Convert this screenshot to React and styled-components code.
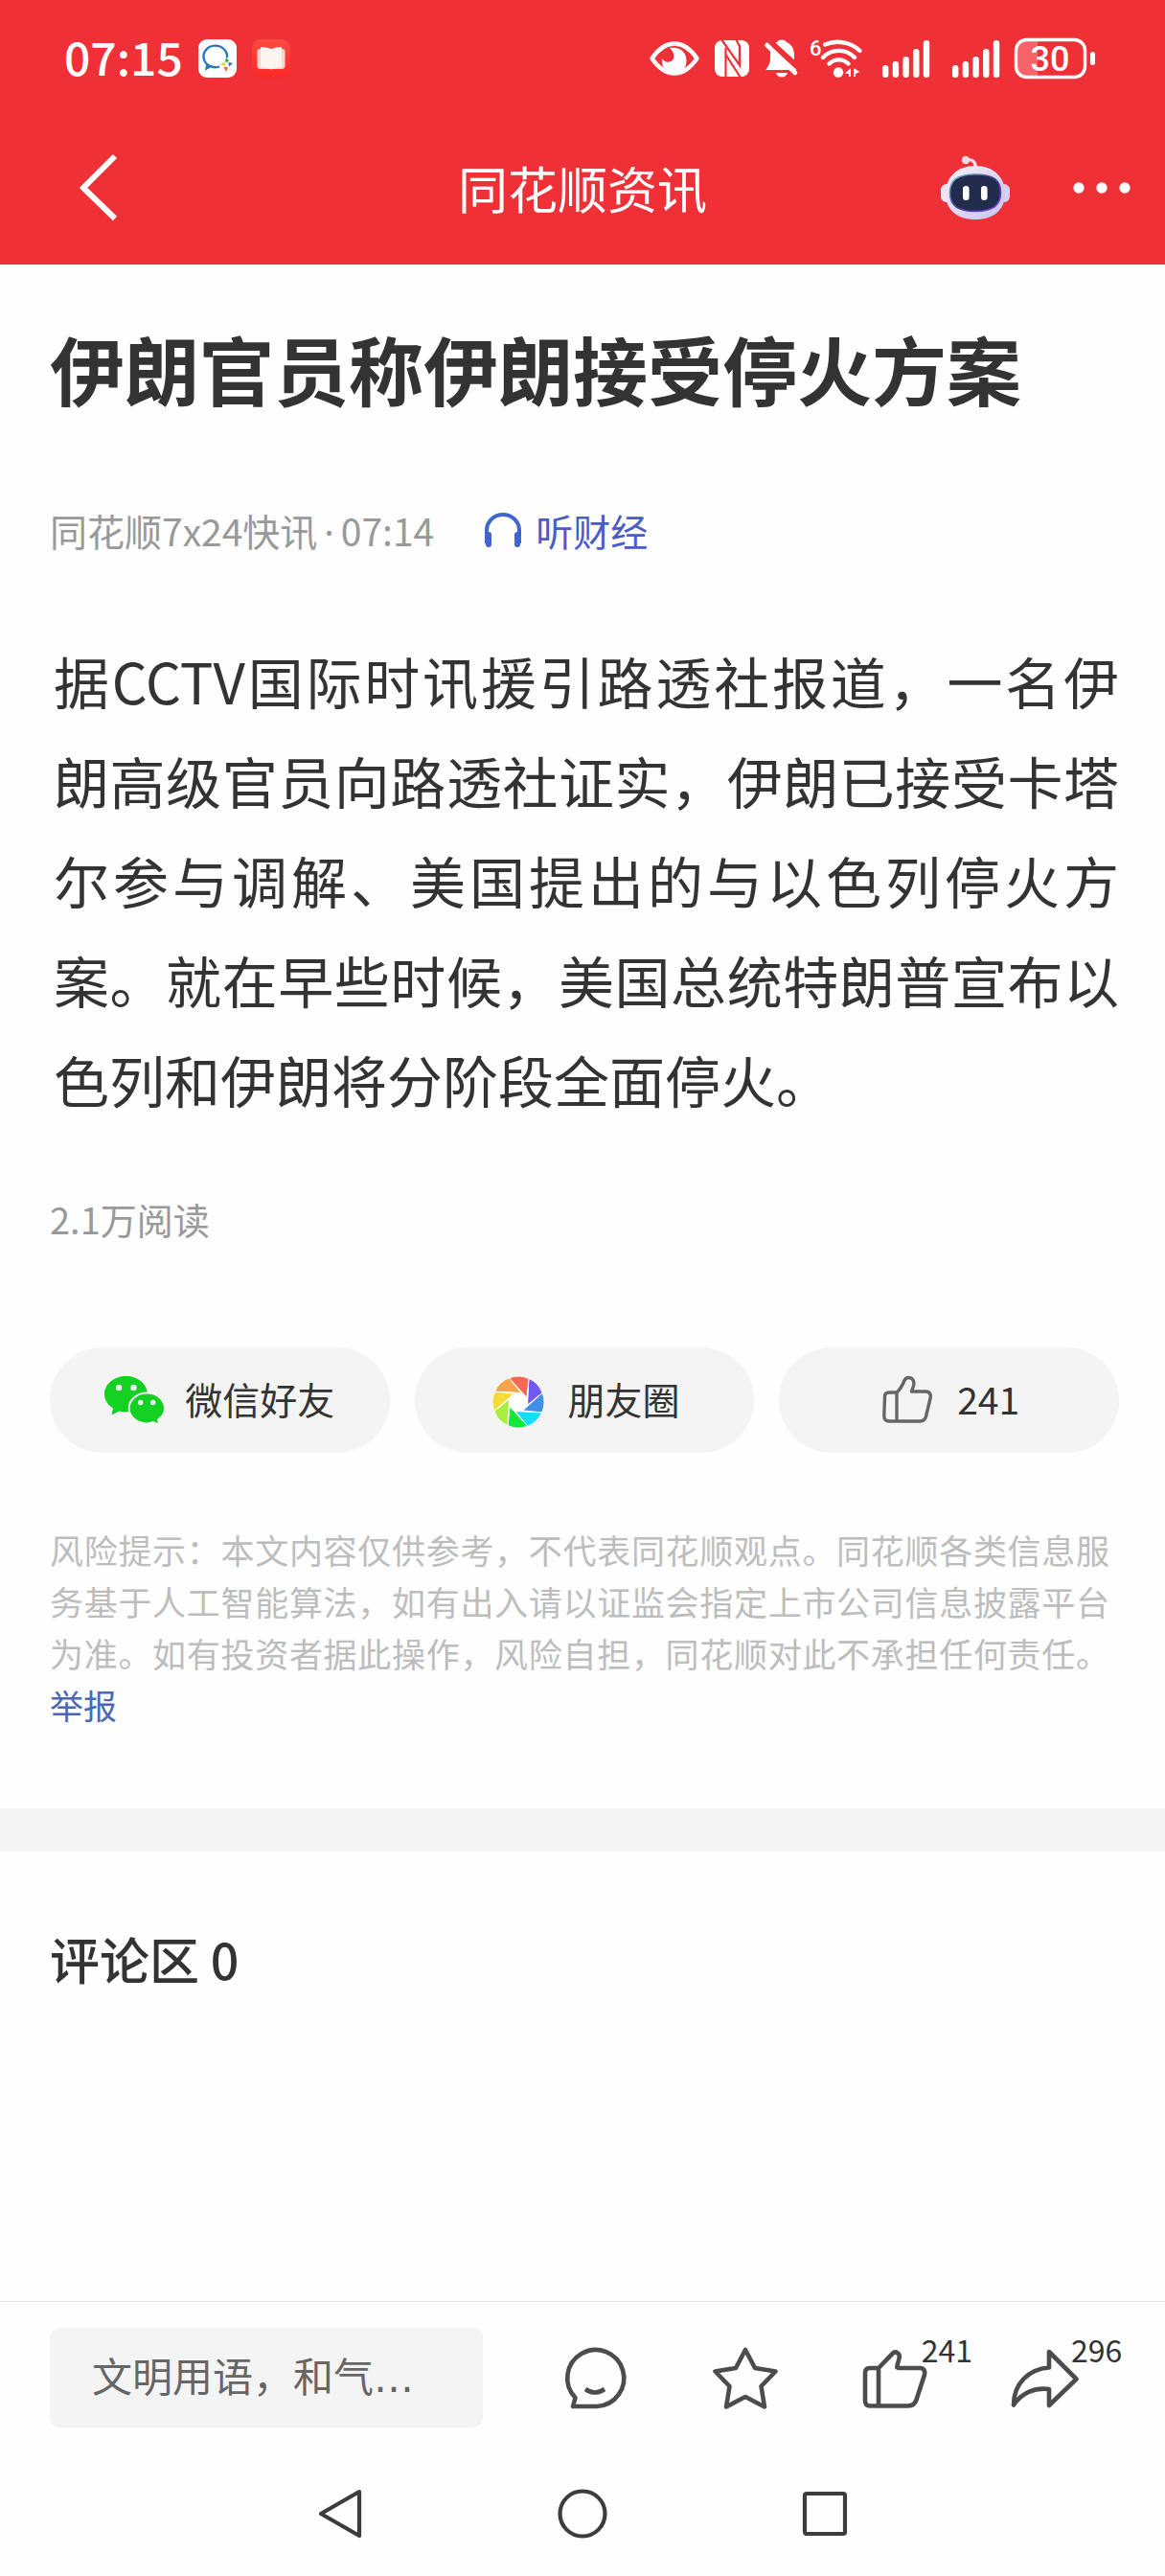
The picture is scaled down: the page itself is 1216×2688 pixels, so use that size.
import React from "react";
import styled, { createGlobalStyle } from "styled-components";

const color = {
  brand: "#f03037",
  ink: "#333333",
  soft: "#666666",
  muted: "#999999",
  faint: "#bdbdbd",
  link: "#4a67b4",
  listen: "#4a5cc6",
  fill: "#f4f4f4",
  page: "#fefefe",
};

const GlobalStyle = createGlobalStyle`
  *, *::before, *::after { box-sizing: border-box; }
  body {
    margin: 0;
    background: ${color.page};
    color: ${color.ink};
    font-family: "Noto Sans CJK SC", "Noto Sans", sans-serif;
  }
  h1, h2, p { margin: 0; }
  button {
    display: inline-flex;
    align-items: center;
    justify-content: center;
    border: 0;
    padding: 0;
    background: none;
    color: inherit;
    font: inherit;
    cursor: pointer;
  }
  svg { display: block; flex: none; overflow: visible; }
`;

const Screen = styled.div`
  display: flex;
  flex-direction: column;
  min-height: 100vh;
`;

const Top = styled.header`
  background: ${color.brand};
  color: #fff;
`;

const StatusBar = styled.div`
  display: flex;
  align-items: center;
  justify-content: space-between;
  height: 122px;
  padding: 0 73px 0 67px;
`;

const StatusGroup = styled.div`
  display: flex;
  align-items: center;
  gap: ${(p) => p.$gap}px;
`;

const Clock = styled.time`
  padding-bottom: 6px;
  font-size: 48px;
  font-weight: 500;
  line-height: 56px;
`;

const TitleBar = styled.div`
  display: grid;
  grid-template-columns: 1fr auto 1fr;
  align-items: center;
  height: 154px;
  padding: 0 36px 6px 82px;
`;

const BarTitle = styled.div`
  margin-right: 46px;
  font-size: 52px;
  line-height: 72px;
`;

const BarActions = styled.div`
  display: flex;
  align-items: center;
  justify-content: flex-end;
  gap: 66px;
`;

const BackButton = styled.button`
  justify-self: start;
`;

const Article = styled.article`
  padding: 58px 48px 81px 52px;
`;

const Headline = styled.h1`
  font-size: 78px;
  font-weight: 700;
  line-height: 100px;
`;

const Meta = styled.div`
  display: flex;
  align-items: center;
  gap: 52px;
  height: 56px;
  margin-top: 91px;
  color: ${color.muted};
  font-size: 39px;
  line-height: 56px;
`;

const Dot = styled.span`
  margin: 0 7px;
  font-family: "Noto Sans", sans-serif;
  line-height: 1;
`;

const ListenButton = styled.button`
  gap: 14px;
  color: ${color.listen};
`;

const Story = styled.p`
  margin-top: 77px;
  padding-left: 4px;
  font-size: 58px;
  line-height: 104px;
  text-align: justify;
`;

const ReadCount = styled.p`
  margin-top: 66px;
  color: ${color.muted};
  font-size: 38px;
  line-height: 56px;
`;

const ShareRow = styled.div`
  display: grid;
  grid-template-columns: repeat(3, 1fr);
  gap: 26px;
  margin-top: 106px;
`;

const Pill = styled.button`
  && {
    gap: 20px;
    height: 110px;
    border-radius: 55px;
    background: ${color.fill};
    font-size: 39px;
    line-height: 56px;
  }
`;

const PillText = styled.span`
  padding-bottom: 4px;
`;

const Notice = styled.p`
  margin-top: 74px;
  padding-right: 10px;
  color: ${color.faint};
  font-size: 35px;
  line-height: 54px;
  text-align: justify;
`;

const ReportLink = styled.a`
  color: ${color.link};
  text-decoration: none;
`;

const Comments = styled.section`
  flex: 1;
  padding: 76px 52px;
  border-top: 45px solid ${color.fill};
`;

const CommentsTitle = styled.h2`
  font-size: 52px;
  font-weight: 500;
  line-height: 72px;
`;

const Toolbar = styled.div`
  display: grid;
  grid-template-columns: 452fr 624fr;
  column-gap: 39px;
  padding: 27px 48px 25px 52px;
  border-top: 1px solid #e6e6e6;
`;

const CommentInput = styled.input`
  width: 100%;
  height: 104px;
  padding: 0 44px;
  border: 0;
  border-radius: 10px;
  background: ${color.fill};
  color: ${color.ink};
  font-family: "DejaVu Sans", "Noto Sans CJK SC", sans-serif;
  font-size: 42px;
  outline: none;
  &::placeholder { color: ${color.soft}; opacity: 1; }
`;

const ToolRow = styled.div`
  display: grid;
  grid-template-columns: repeat(4, 1fr);
`;

const ToolButton = styled.button`
  position: relative;
`;

const Badge = styled.span`
  position: absolute;
  top: 4px;
  left: calc(50% + 28px);
  font-size: 32px;
  line-height: 36px;
`;

const SystemNav = styled.nav`
  display: grid;
  grid-template-columns: repeat(3, 253px);
  justify-content: center;
  height: 130px;
`;

const StatusSvg = ({ w, label, children }) => (
  <svg width={w} height="44" viewBox={`0 0 ${w} 44`} fill="#fff" fontFamily="Roboto, sans-serif" role="img" aria-label={label}>
    {children}
  </svg>
);

const Signal = ({ w }) => (
  <StatusSvg w={w} label="signal">
    {[29, 25, 20, 12, 3].map((y, i) => (
      <rect key={y} x={i * 10.7} y={y} width="6.4" height={42 - y} rx="3.2" />
    ))}
  </StatusSvg>
);

const StatusIcons = () => (
  <StatusGroup $gap={12}>
    <StatusSvg w={56} label="eye comfort">
      <path d="M2.500 22C10 11 18 6.500 26 6.500S42 11 49.500 22C42 33 34 37.500 26 37.500S10 33 2.500 22Z" fill="none" stroke="#fff" strokeWidth="4.400" strokeLinejoin="round" />
      <path d="M21 11C32 9 38.500 16 38.500 24C38.500 34 32 38 26 38C18 38 12 32 13 22C16 27 23 27 25 22C26 17 24 14 21 11Z" />
    </StatusSvg>
    <StatusSvg w={40} label="NFC">
      <rect y="3" width="36" height="38" rx="8" />
      <path d="M7 2L26 29V9L22 2M11.500 42V11" fill="none" stroke={color.brand} strokeWidth="2.200" />
      <path d="M11.500 18L27 42M26 27V8" fill="none" stroke={color.brand} strokeWidth="2.200" />
    </StatusSvg>
    <StatusSvg w={35} label="muted">
      <path d="M13 5C14 1.500 22 1.500 23 5C28 7 31 12 31 18V26L34 34H1C4 30 6 27 6 22V16C6 11 8 7 13 5Z" />
      <path d="M12 37H24C22 43 14 43 12 37Z" />
      <path d="M4 3L36 32" stroke={color.brand} strokeWidth="6" />
      <path d="M2.500 8L32 37" stroke="#fff" strokeWidth="4.600" strokeLinecap="round" />
    </StatusSvg>
    <StatusSvg w={64} label="Wi-Fi 6">
      <text x="0" y="19" fontSize="22" fontWeight="500">6</text>
      <g fill="none" stroke="#fff" strokeWidth="4.400" strokeLinecap="round">
        <path d="M16 7.500C28 2.500 43 4.500 52.500 14" />
        <path d="M14 21C23 11.500 38 11.500 47 21" />
        <path d="M20.500 27.500C26 22 35 22 40.500 27.500" />
      </g>
      <circle cx="30" cy="36.500" r="5.200" />
      <path d="M43 32V41H41V38L37 37.500ZM46 32L52.500 36L48 38V41H46Z" />
    </StatusSvg>
    <Signal w={61} />
    <Signal w={52} />
    <StatusSvg w={85} label="battery 30%">
      <path d="M13 3H25V41H13Q3 41 3 31V13Q3 3 13 3Z" fillOpacity=".25" />
      <rect x="2.500" y="2.500" width="72" height="39" rx="11" fill="none" stroke="#fff" strokeWidth="3.400" />
      <text x="38" y="35" fontSize="36" fontWeight="500" textAnchor="middle">30</text>
      <rect x="80" y="15" width="5" height="14" rx="2.500" />
    </StatusSvg>
  </StatusGroup>
);

const ChatAppIcon = () => (
  <svg width="40" height="40" viewBox="0 0 40 40" aria-hidden="true">
    <rect width="40" height="40" rx="9" fill="#fff" />
    <path d="M30 19A12.300 11.300 0 1 0 22 28.500Q16 30 13 28L8.500 30.500L9.500 26" fill="none" stroke="#2277bd" strokeWidth="2.300" />
    <path d="M29 18.500L32 23L28 24Z" fill="#1fae3a" />
    <path d="M36 25L32 28.500L31.500 24Z" fill="#1d72c8" />
    <path d="M29 34L26.500 29H31Z" fill="#e8622c" />
    <path d="M23 26.500L27.500 23.500L28 28Z" fill="#f5c72b" />
  </svg>
);

const BookAppIcon = () => (
  <svg width="40" height="40" viewBox="0 0 40 40" aria-hidden="true">
    <defs>
      <linearGradient id="book" x1="0" y1="0" x2="0" y2="1">
        <stop offset="0" stopColor="#f94a42" />
        <stop offset="1" stopColor="#fb2826" />
      </linearGradient>
    </defs>
    <rect width="40" height="40" rx="9" fill="url(#book)" />
    <path d="M5.500 12Q5.500 10 8 10H32Q34.500 10 34.500 12V28Q34.500 31 31 31H9Q5.500 31 5.500 28Z" fill="#ffd3cd" />
    <path d="M9 8Q15 8 20 10Q25 8 31 8V29Q25 29 20 31.500Q15 29 9 29Z" fill="#fff4ef" />
  </svg>
);

const Robot = () => (
  <svg width="72" height="68" viewBox="0 0 72 68" aria-hidden="true">
    <defs>
      <linearGradient id="shell" x1="0" y1="0" x2="1" y2="1">
        <stop offset="0" stopColor="#fbeef6" />
        <stop offset="1" stopColor="#c3c4f2" />
      </linearGradient>
      <linearGradient id="rim" x1="0" y1="0" x2="1" y2="1">
        <stop offset="0" stopColor="#6fc3cf" />
        <stop offset=".5" stopColor="#4b3f9c" />
        <stop offset="1" stopColor="#7a3fe0" />
      </linearGradient>
    </defs>
    <path d="M26 5Q36 3 36.500 13" fill="none" stroke="#fbdbe4" strokeWidth="3.400" />
    <circle cx="26" cy="5" r="4.200" fill="#fcd9e2" />
    <rect x="0" y="30" width="12" height="19" rx="6" fill="#efe3f4" />
    <rect x="60" y="30" width="12" height="19" rx="6" fill="#d6d0f2" />
    <path d="M36 11C55 11 67 23 67 40C67 57 55 67 36 67S5 57 5 40C5 23 17 11 36 11Z" fill="url(#shell)" />
    <path d="M36 20C55 20 62.500 26 62.500 39S55 58.500 36 58.500S9.500 52 9.500 39S17 20 36 20Z" fill="#222c4b" stroke="url(#rim)" strokeWidth="1.600" />
    <rect x="23" y="32" width="6.600" height="15" rx="3.300" fill="#fff" />
    <rect x="42" y="32" width="6.600" height="15" rx="3.300" fill="#fff" />
  </svg>
);

const WechatIcon = () => (
  <svg width="64" height="52" viewBox="0 0 64 52" aria-hidden="true">
    <path d="M22.500 1C35 1 45 9.200 45 19.800S35 38.500 22.500 38.500Q18.500 38.500 15.500 37.500L7.500 41.500L9 34.500C3.500 31 0 26 0 19.800C0 9.200 10 1 22.500 1Z" fill="#14d023" />
    <path d="M44.500 18.500C55 18.500 63 25.500 63 34.500C63 39.500 60.500 43.500 56 46.500L57.500 52L51 49Q48 50.500 44.500 50.500C34 50.500 25.700 43.500 25.700 34.500S34 18.500 44.500 18.500Z" fill="#14d023" stroke={color.fill} strokeWidth="2" />
    <g fill="#f4f4f4">
      <circle cx="15" cy="13" r="3.200" />
      <circle cx="30.500" cy="13" r="3.200" />
      <circle cx="37.700" cy="28.500" r="2.700" />
      <circle cx="50.700" cy="28.500" r="2.700" />
    </g>
  </svg>
);

const bladeColors = ["#7159f5", "#428fe8", "#12dff5", "#10e83c", "#a8ee3c", "#f3dc38", "#f6a64a", "#f56a50"];

const polar = (deg, r) => {
  const a = (deg * Math.PI) / 180;
  return `${31 + r * Math.cos(a)} ${28 + r * Math.sin(a)}`;
};

const MomentsIcon = () => (
  <svg width="62" height="52" viewBox="0 0 62 52" aria-hidden="true">
    <circle cx="31" cy="28" r="15" fill="#fff" />
    {bladeColors.map((fill, k) => (
      <path
        key={fill}
        d={`M${polar(k * 45 - 66, 27)}A27 27 0 0 1 ${polar(k * 45 - 21, 27)}L${polar(k * 45 + 18, 10)}Z`}
        fill={fill}
        stroke="#fff"
        strokeWidth="1"
      />
    ))}
  </svg>
);

const PillThumb = () => (
  <svg width="62" height="56" viewBox="0 0 62 56" fill="none" stroke="#666" strokeWidth="3.400" strokeLinejoin="round" aria-hidden="true">
    <path d="M19 20H11Q6.500 20 6.500 24.500L5.800 44.500Q6 50 11 50H43.500Q48 50 49.500 45L54.300 25Q54.500 19.500 50 19H34.500L36.500 13C38 8 35 4.500 31.500 4.500C29 4.500 27.500 6 26.500 8.500Q23.500 16 19 20V50" />
  </svg>
);

const ToolSvg = ({ children }) => (
  <svg width="72" height="72" viewBox="0 0 72 72" fill="none" stroke="#4c4c4c" strokeWidth="4.600" strokeLinejoin="round" aria-hidden="true">
    {children}
  </svg>
);

const NavSvg = ({ children }) => (
  <svg width="54" height="54" viewBox="0 0 54 54" fill="none" stroke="#3c3c3c" strokeWidth="4.200" strokeLinejoin="round" aria-hidden="true">
    {children}
  </svg>
);

export default function App() {
  return (
    <Screen>
      <GlobalStyle />
      <Top>
        <StatusBar>
          <StatusGroup $gap={16}>
            <Clock>07:15</Clock>
            <ChatAppIcon />
            <BookAppIcon />
          </StatusGroup>
          <StatusIcons />
        </StatusBar>
        <TitleBar>
          <BackButton aria-label="返回">
            <svg width="42" height="70" viewBox="0 0 42 70" fill="none" stroke="#fff" strokeWidth="6">
              <path d="M38 2L5 35L38 67" />
            </svg>
          </BackButton>
          <BarTitle>同花顺资讯</BarTitle>
          <BarActions>
            <button aria-label="智能助手"><Robot /></button>
            <button aria-label="更多">
              <svg width="60" height="12" viewBox="0 0 60 12" fill="#fff">
                <circle cx="6" cy="6" r="5.700" />
                <circle cx="30" cy="6" r="5.700" />
                <circle cx="54" cy="6" r="5.700" />
              </svg>
            </button>
          </BarActions>
        </TitleBar>
      </Top>

      <Article>
        <Headline>伊朗官员称伊朗接受停火方案</Headline>
        <Meta>
          <span>同花顺7x24快讯<Dot>·</Dot>07:14</span>
          <ListenButton>
            <svg width="40" height="36" viewBox="0 0 40 36" fill="none" stroke="#3f66cf" aria-hidden="true">
              <path d="M3 32V18A17 16 0 0 1 37 18V32" strokeWidth="4" />
              <path d="M5 23V33M35 23V33" strokeWidth="6" strokeLinecap="round" />
            </svg>
            听财经
          </ListenButton>
        </Meta>
        <Story>
          据CCTV国际时讯援引路透社报道，一名伊朗高级官员向路透社证实，伊朗已接受卡塔尔参与调解、美国提出的与以色列停火方案。就在早些时候，美国总统特朗普宣布以色列和伊朗将分阶段全面停火。
        </Story>
        <ReadCount>2.1万阅读</ReadCount>
        <ShareRow>
          <Pill><WechatIcon /><PillText>微信好友</PillText></Pill>
          <Pill><MomentsIcon /><PillText>朋友圈</PillText></Pill>
          <Pill><PillThumb /><PillText>241</PillText></Pill>
        </ShareRow>
        <Notice>
          风险提示：本文内容仅供参考，不代表同花顺观点。同花顺各类信息服务基于人工智能算法，如有出入请以证监会指定上市公司信息披露平台为准。如有投资者据此操作，风险自担，同花顺对此不承担任何责任。
          <ReportLink href="#report">举报</ReportLink>
        </Notice>
      </Article>

      <Comments>
        <CommentsTitle>评论区 0</CommentsTitle>
      </Comments>

      <Toolbar>
        <CommentInput type="text" aria-label="发表评论" placeholder="文明用语，和气…" />
        <ToolRow>
          <ToolButton aria-label="评论">
            <ToolSvg>
              <path d="M15.500 57L13 66H38A29.500 29.500 0 1 0 15.500 57Z" />
              <path d="M26 48Q36 55 46 48" />
            </ToolSvg>
          </ToolButton>
          <ToolButton aria-label="收藏">
            <ToolSvg>
              <path d="M36 7L46 26L67.500 29.500L52.500 45L56 66.500L36 56L16 66.500L19.500 45L4.500 29.500L26 26Z" />
            </ToolSvg>
          </ToolButton>
          <ToolButton aria-label="点赞">
            <ToolSvg>
              <path d="M19 26H10Q5 26 5 31V60Q5 65.500 10 65.500H50Q56.500 65.500 58.500 59L67 33Q68 26.500 63 26H40Q37.500 26 38.500 23.500L40.500 16C42 11 37 7.500 33.500 11L19 26V65.500" />
            </ToolSvg>
            <Badge>241</Badge>
          </ToolButton>
          <ToolButton aria-label="分享">
            <ToolSvg>
              <path d="M41 9L69.500 37.500L41 65V48C26 46 12 52 4 64.500C4 42 20 27 41 25.500Z" />
            </ToolSvg>
            <Badge>296</Badge>
          </ToolButton>
        </ToolRow>
      </Toolbar>

      <SystemNav aria-label="系统导航">
        <button aria-label="返回上一级">
          <NavSvg><path d="M47 4L7 27L47 50Z" /></NavSvg>
        </button>
        <button aria-label="主屏幕">
          <NavSvg><circle cx="27" cy="27" r="23.500" /></NavSvg>
        </button>
        <button aria-label="最近任务">
          <NavSvg><rect x="6" y="6" width="42" height="42" rx="2" /></NavSvg>
        </button>
      </SystemNav>
    </Screen>
  );
}
